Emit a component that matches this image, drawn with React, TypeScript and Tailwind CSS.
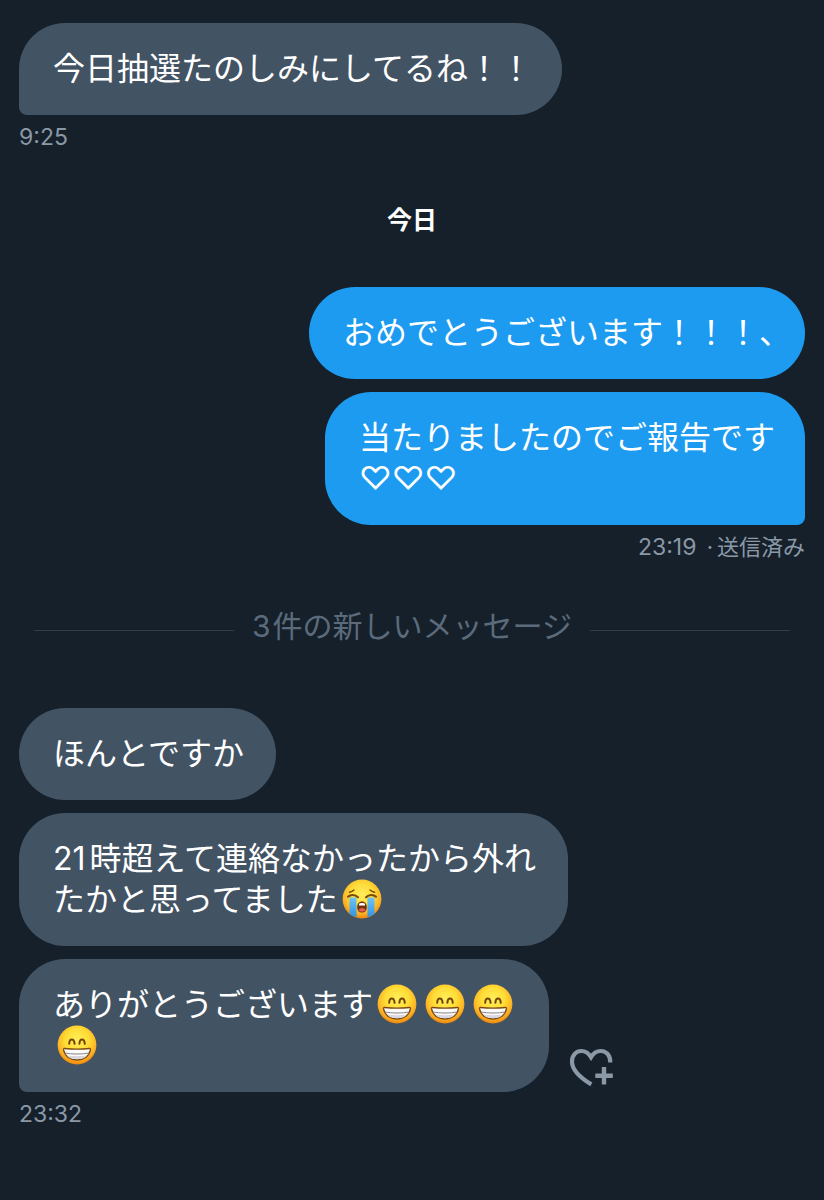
import type { ReactNode } from "react";

function GrinEmoji() {
  return (
    <svg viewBox="0 0 40 40" role="img" aria-label="😁" className="mx-1 inline-block size-10 align-[-8px]">
      <defs>
        <radialGradient id="grin-face" cx="50%" cy="38%" r="62%">
          <stop offset="0" stopColor="#fff05a" />
          <stop offset="0.5" stopColor="#ffdc35" />
          <stop offset="0.8" stopColor="#fcb424" />
          <stop offset="1" stopColor="#ee860c" />
        </radialGradient>
      </defs>
      <circle cx="20" cy="20" r="19.4" fill="url(#grin-face)" />
      <g fill="none" stroke="#734308" strokeWidth="2" strokeLinecap="round">
        <path d="M12.2 18.8c.3-5.800 4.900-5.800 5.400 0" />
        <path d="M22.4 18.8c.3-5.800 4.900-5.800 5.400 0" />
      </g>
      <path
        d="M7.400 23.500c-.7 0-1 .5-.9 1.200C7.600 31 13 35 20 35s12.400-4 13.500-10.300c.1-.7-.2-1.200-.9-1.200-8.400.8-16.800.8-25.200 0z"
        fill="#fbfbfb"
        stroke="#7c4a10"
        strokeWidth="1.300"
      />
      <path d="M8 28c7 1.400 17 1.400 24 0" fill="none" stroke="#8c8488" strokeWidth="1" />
      <path d="M10 30.300c3 5.200 17 5.200 20 0-6 1.200-14 1.200-20 0z" fill="#d9d6dc" />
    </svg>
  );
}

function SobEmoji() {
  return (
    <svg viewBox="0 0 40 40" role="img" aria-label="😭" className="mx-1 inline-block size-10 align-[-8px]">
      <defs>
        <radialGradient id="sob-face" cx="50%" cy="38%" r="62%">
          <stop offset="0" stopColor="#ffee5c" />
          <stop offset="0.5" stopColor="#ffd936" />
          <stop offset="0.8" stopColor="#fbb126" />
          <stop offset="1" stopColor="#ee860c" />
        </radialGradient>
        <linearGradient id="sob-tear" x1="0" y1="0" x2="0" y2="1">
          <stop offset="0" stopColor="#6fc4f5" />
          <stop offset="1" stopColor="#2f93e4" />
        </linearGradient>
      </defs>
      <circle cx="20" cy="20" r="19.4" fill="url(#sob-face)" />
      <path d="M7.500 18.500h7V38c-2.600-.4-5-1.600-7-3.400z" fill="url(#sob-tear)" />
      <path d="M25.500 18.500h7v16.100c-2 1.800-4.400 3-7 3.400z" fill="url(#sob-tear)" />
      <g fill="none" stroke="#7a4a0d" strokeWidth="1.500" strokeLinecap="round">
        <path d="M7.500 13.300c1.600-.3 3.200-1 4.400-2.300" />
        <path d="M32.500 13.300c-1.600-.3-3.200-1-4.400-2.300" />
        <path d="M6 17.800c2.400-2.600 7-2.600 10 .4" strokeWidth="2" />
        <path d="M34 17.800c-2.400-2.600-7-2.600-10 .4" strokeWidth="2" />
      </g>
      <path d="M20 22.500c3 0 4.800 2.400 4.800 5.700 0 3.400-1.800 5.300-4.800 5.300s-4.800-1.900-4.800-5.300c0-3.300 1.800-5.700 4.800-5.700z" fill="#70350f" />
      <path d="M17 25c1-1.400 5-1.400 6 0v1.400h-6z" fill="#fff" />
      <path d="M16.600 31c1-2.300 5.800-2.300 6.800 0-1.400 2.200-5.400 2.200-6.800 0z" fill="#ee5a55" />
    </svg>
  );
}

function AddReactionIcon() {
  return (
    <svg viewBox="0 0 44 40" aria-hidden="true" className="h-10 w-11" fill="none" stroke="currentColor">
      <path
        d="M22.300 36.400C12.500 30.500 3 22.500 3 13.500 3 7 7.200 3 12.300 3c4.200 0 7.600 2.600 9.700 6.200C24.100 5.600 27.500 3 31.700 3 37 3 41.200 7 41.200 13.500v.9"
        strokeWidth="4.200"
      />
      <path d="M35 19v17.500M26.300 27.700h17.500" strokeWidth="4.400" />
    </svg>
  );
}

const bubbleStyles = {
  received: "self-start bg-[#425364]",
  sent: "self-end bg-[#1d9bf0]",
};

type BubbleProps = {
  from: keyof typeof bubbleStyles;
  corner?: string;
  end?: string;
  children: ReactNode;
};

function Bubble({ from, corner = "", end = "pr-8", children }: BubbleProps) {
  return (
    <p
      className={`w-fit rounded-[46px] pt-[25px] pb-[26px] pl-[34px] text-[32px] leading-[41px] text-white ${end} ${corner} ${bubbleStyles[from]}`}
    >
      {children}
    </p>
  );
}

export default function App() {
  return (
    <main className="flex min-h-screen flex-col bg-[#15202b] px-[19px] pt-[23px] pb-[70px] font-['Inter','Noto_Sans_CJK_JP',sans-serif]">
      <section className="flex flex-col">
        <Bubble from="received" corner="rounded-bl-lg" end="pr-[30px]">
          今日抽選たのしみにしてるね！！
        </Bubble>
        <time className="mt-2 text-[23px] leading-7 text-[#8b98a5]">9:25</time>
      </section>

      <h2 className="mt-[51px] text-center text-[25px] leading-9 font-bold text-white">今日</h2>

      <section className="mt-[49px] flex flex-col gap-[13px]">
        <Bubble from="sent" end="pr-3.5">
          おめでとうございます！！！、
        </Bubble>
        <Bubble from="sent" corner="rounded-br-lg" end="pr-[30px]">
          当たりましたのでご報告です
          <br />
          ♡♡♡
        </Bubble>
      </section>
      <p className="mt-2 text-right text-[22px] leading-7 text-[#8b98a5]">
        <time className="mr-1 text-[23px]">23:19</time> <span className="mr-1">·</span>送信済み
      </p>

      <div className="mx-[15px] mt-11 flex items-center gap-[18px]">
        <span className="h-px flex-1 bg-[#2f3d4a]" />
        <h2 className="pb-2 text-[30px] leading-[42px] text-[#5b6b7b]">
          <span className="mr-0.5">3</span>件の新しいメッセージ
        </h2>
        <span className="h-px flex-1 bg-[#2f3d4a]" />
      </div>

      <section className="mt-[53px] flex flex-col gap-[13px]">
        <Bubble from="received">ほんとですか</Bubble>
        <Bubble from="received">
          <span className="mr-1">21</span>時超えて連絡なかったから外れ
          <br />
          たかと思ってました
          <SobEmoji />
        </Bubble>
        <div className="flex items-end gap-5">
          <Bubble from="received" corner="rounded-bl-lg">
            ありがとうございます
            <GrinEmoji />
            <GrinEmoji />
            <GrinEmoji />
            <br />
            <GrinEmoji />
          </Bubble>
          <button type="button" aria-label="リアクションを追加" className="mb-1 text-[#8b98a5]">
            <AddReactionIcon />
          </button>
        </div>
      </section>
      <time className="mt-2 text-[23px] leading-7 text-[#8b98a5]">23:32</time>
    </main>
  );
}
